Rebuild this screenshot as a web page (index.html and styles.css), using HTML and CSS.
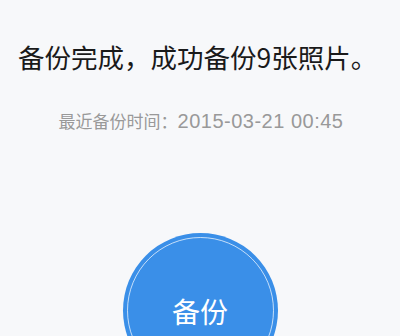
FILE: index.html
```html
<!DOCTYPE html>
<html>
<head>
<meta charset="utf-8">
<title>备份</title>
<link rel="stylesheet" href="styles.css">
</head>
<body>
<div class="page">
	<h1 class="title">备份完成，成功备份9张照片。</h1>
	<p class="time">最近备份时间：<span class="date">2015-03-21 00:45</span></p>
	<div class="btn-wrap">
		<div class="backup-btn"><span>备份</span></div>
	</div>
</div>
</body>
</html>
```

FILE: styles.css
```css
*{ margin:0; padding:0;}
html,body{ height:100%; overflow:hidden;}
body{ background:#f7f8fa; font-family:"Noto Sans CJK SC", sans-serif;}
.page{ padding-top:39px; text-align:center;}
.title{ font-size:26.5px; font-weight:normal; color:#1a1a1a; line-height:36px; text-align:left; padding-left:18px;}
.time{ font-size:17px; color:#999; line-height:24px; margin-top:34px; padding-left:2px;}
.time .date{ font-family:"Liberation Sans", sans-serif; font-size:20px; letter-spacing:0.5px;}
.btn-wrap{ display:flex; justify-content:center; margin-top:100px;}
.backup-btn{ width:155px; height:155px; border-radius:50%; background:#3a8fe8; display:flex; justify-content:center; align-items:center; position:relative;}
.backup-btn:before{ content:""; position:absolute; left:4px; top:4px; right:4px; bottom:4px; border:1px solid rgba(255,255,255,0.7); border-radius:50%;}
.backup-btn span{ color:#fff; font-size:28px; line-height:30px;}
```
